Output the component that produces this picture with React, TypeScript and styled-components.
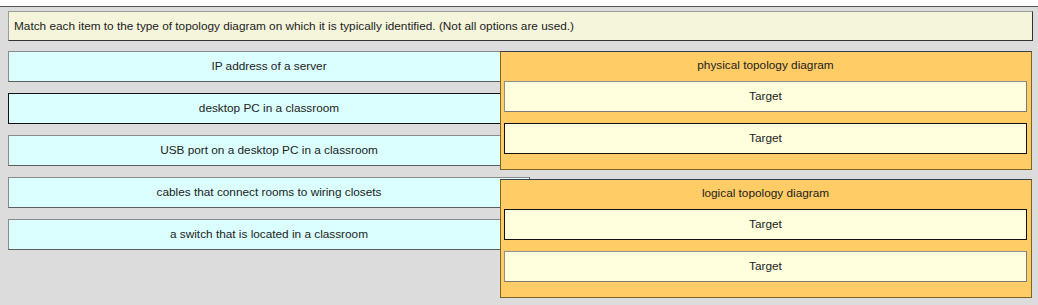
import React from 'react'
import styled, { createGlobalStyle } from 'styled-components'

const GlobalStyle = createGlobalStyle`
  html, body {
    margin: 0;
    padding: 0;
    background: #dcdcdc;
    font-family: Arial, "Liberation Sans", sans-serif;
  }
`

const Page = styled.div`
  width: 1038px;
  height: 305px;
  background: #dcdcdc;
  overflow: hidden;
`

const TopStrip = styled.div`
  height: 6px;
  background: #ffffff;
  border-bottom: 1px solid #555555;
`

const Body = styled.div`
  padding: 4px 5px 0 8px;
`

const Instructions = styled.div`
  box-sizing: border-box;
  width: 1025px;
  height: 30px;
  display: flex;
  align-items: center;
  padding-left: 5px;
  background: #f5f5dc;
  border-style: solid;
  border-width: 1px;
  border-color: #9a9a9a #333333 #333333 #9a9a9a;
  font-size: 11.8px;
  color: #222222;
`

const Board = styled.div`
  display: grid;
  grid-template-columns: 492px 30px 502px;
  margin-top: 10px;
`

const ItemList = styled.div`
  grid-column: 1 / 3;
  grid-row: 1;
  display: flex;
  flex-direction: column;
  gap: 11px;
`

const Item = styled.div<{ $dark?: boolean }>`
  box-sizing: border-box;
  height: 31px;
  display: flex;
  align-items: center;
  justify-content: center;
  background: #dbffff;
  border: 1px solid ${(p) => (p.$dark ? '#111111' : '#5e5e5e')};
  border-top-color: ${(p) => (p.$dark ? '#111111' : '#8a8a8a')};
  border-left-color: ${(p) => (p.$dark ? '#111111' : '#8a8a8a')};
  font-size: 11.8px;
  color: #222222;
  padding-bottom: 1px;
`

const PanelList = styled.div`
  grid-column: 2 / 4;
  grid-row: 1;
  display: flex;
  flex-direction: column;
  gap: 9px;
  z-index: 1;
`

const Panel = styled.div`
  box-sizing: border-box;
  height: 119px;
  width: 532px;
  display: flex;
  flex-direction: column;
  gap: 11px;
  padding: 0 4px 0 3px;
  background: #ffcc66;
  border: 1px solid #7d6420;
  border-top-color: #3a3d4a;
`

const PanelTitle = styled.div`
  box-sizing: border-box;
  height: 18px;
  display: flex;
  align-items: flex-end;
  justify-content: center;
  padding-bottom: 0;
  font-size: 11.8px;
  color: #222222;
  line-height: 14px;
  transform: translateY(2px);
`

const Target = styled.div<{ $dark?: boolean }>`
  box-sizing: border-box;
  height: 31px;
  display: flex;
  align-items: center;
  justify-content: center;
  background: #ffffdd;
  border: 1px solid ${(p) => (p.$dark ? '#111111' : '#7a7a7a')};
  border-top-color: ${(p) => (p.$dark ? '#111111' : '#8f8f8f')};
  border-left-color: ${(p) => (p.$dark ? '#111111' : '#8f8f8f')};
  font-size: 11.8px;
  color: #222222;
  padding-bottom: 1px;
`

const items = [
  { label: 'IP address of a server', dark: false },
  { label: 'desktop PC in a classroom', dark: true },
  { label: 'USB port on a desktop PC in a classroom', dark: false },
  { label: 'cables that connect rooms to wiring closets', dark: false },
  { label: 'a switch that is located in a classroom', dark: false },
]

const panels = [
  { title: 'physical topology diagram', targets: [false, true] },
  { title: 'logical topology diagram', targets: [true, false] },
]

export default function App() {
  return (
    <Page>
      <GlobalStyle />
      <TopStrip />
      <Body>
        <Instructions>
          Match each item to the type of topology diagram on which it is typically identified. (Not all options are used.)
        </Instructions>
        <Board>
          <ItemList>
            {items.map((it) => (
              <Item key={it.label} $dark={it.dark}>
                {it.label}
              </Item>
            ))}
          </ItemList>
          <PanelList>
            {panels.map((p) => (
              <Panel key={p.title}>
                <PanelTitle>{p.title}</PanelTitle>
                {p.targets.map((dark, i) => (
                  <Target key={i} $dark={dark}>
                    Target
                  </Target>
                ))}
              </Panel>
            ))}
          </PanelList>
        </Board>
      </Body>
    </Page>
  )
}
